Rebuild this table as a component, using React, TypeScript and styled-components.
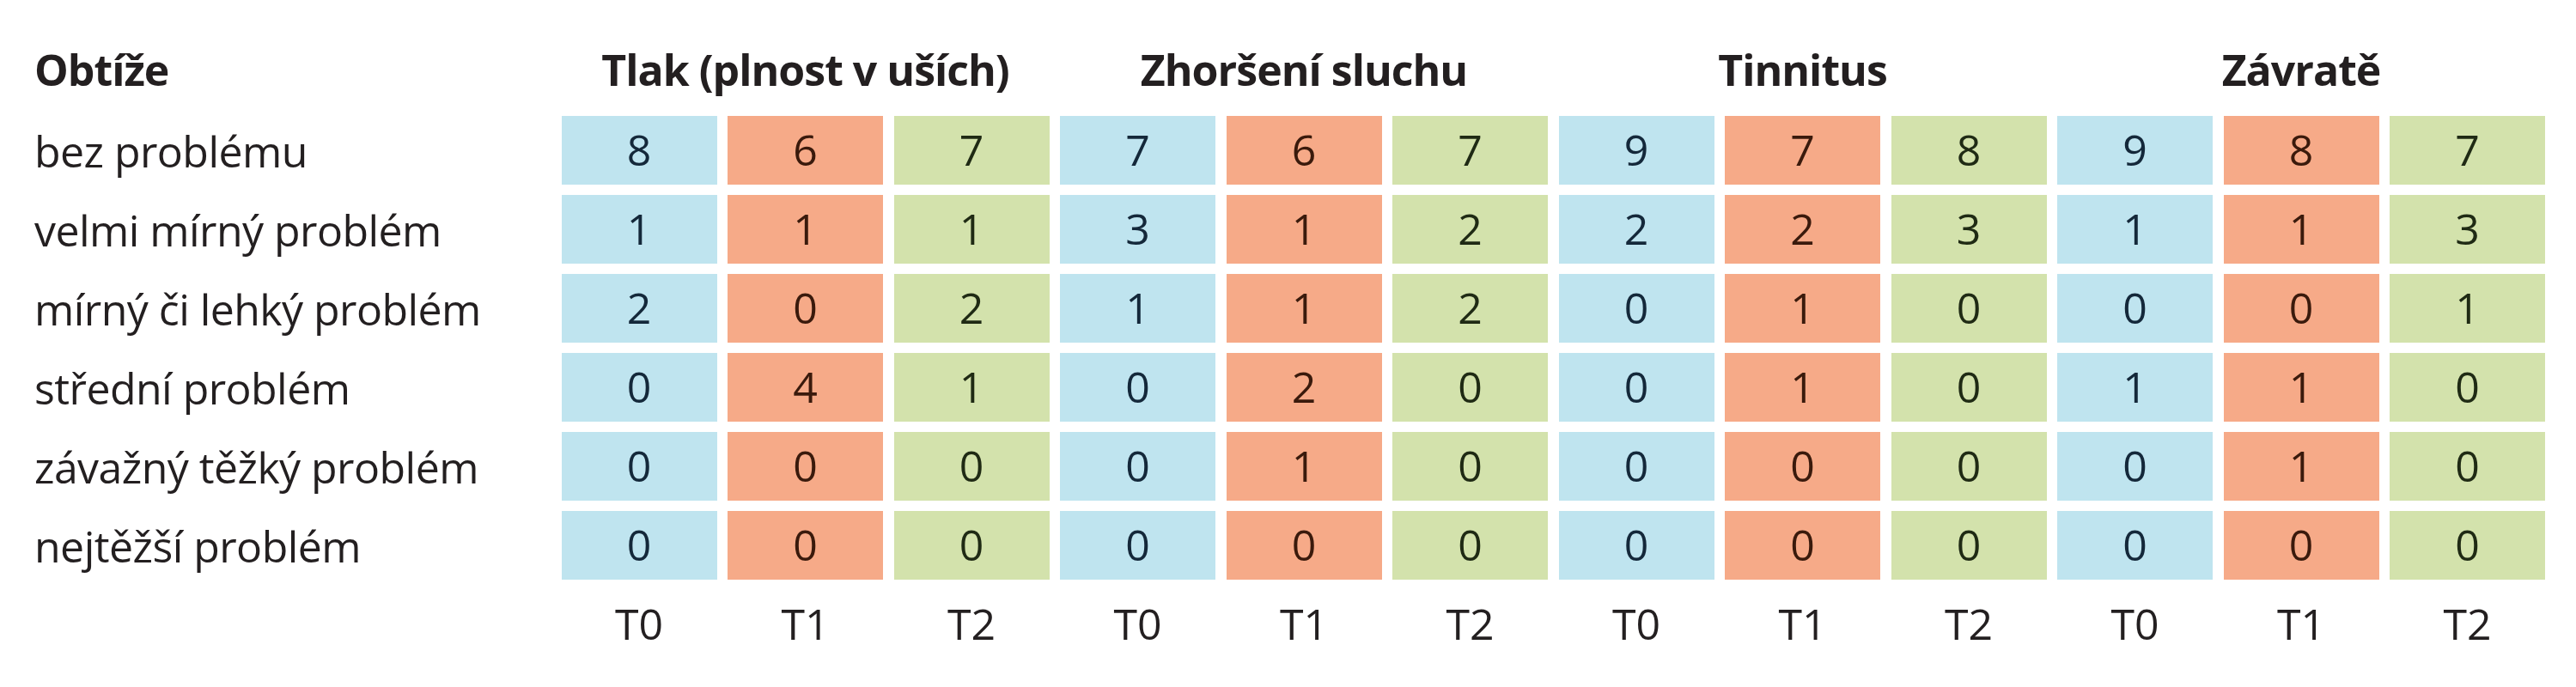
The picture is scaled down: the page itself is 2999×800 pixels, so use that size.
import React from "react";
import styled, { createGlobalStyle } from "styled-components";

const GlobalStyle = createGlobalStyle`
  html, body {
    margin: 0;
    padding: 0;
    background: #ffffff;
  }
  body {
    font-family: "Open Sans", "Noto Sans", sans-serif;
    color: #231f20;
  }
`;

type Tone = "blue" | "orange" | "green";

const toneBg: Record<Tone, string> = {
  blue: "#bfe4ef",
  orange: "#f6aa88",
  green: "#d3e2ac",
};

const toneInk: Record<Tone, string> = {
  blue: "#14283a",
  orange: "#3a1a0c",
  green: "#1f2a14",
};

const Page = styled.div`
  padding: 0 0 0 40px;
  width: 2999px;
  box-sizing: border-box;
`;

const Table = styled.div`
  display: grid;
  grid-template-columns: 601px repeat(12, 181px);
  grid-template-rows: 123px repeat(6, 80px) 80px;
  column-gap: 12.5px;
  row-gap: 12px;
`;

const HeadText = styled.div`
  align-self: end;
  font-size: 50px;
  line-height: 50px;
  font-weight: 700;
  letter-spacing: -1px;
  padding-bottom: 17px;
  white-space: nowrap;
`;

const CornerHeading = styled(HeadText)`
  text-align: left;
`;

const GroupHeading = styled(HeadText)`
  grid-column: span 3;
  text-align: center;
`;

const RowLabel = styled.div`
  display: flex;
  align-items: center;
  font-size: 50px;
  letter-spacing: -0.55px;
  padding-top: 2px;
  white-space: nowrap;
`;

const Cell = styled.div<{ $tone: Tone }>`
  display: flex;
  align-items: center;
  justify-content: center;
  background: ${(p) => toneBg[p.$tone]};
  color: ${(p) => toneInk[p.$tone]};
  font-size: 50px;
  padding-bottom: 3px;
  box-sizing: border-box;
`;

const TimeLabel = styled.div`
  display: flex;
  align-items: center;
  justify-content: center;
  font-size: 50px;
  padding-bottom: 2px;
  box-sizing: border-box;
`;

const groups = ["Tlak (plnost v uších)", "Zhoršení sluchu", "Tinnitus", "Závratě"];
const tones: Tone[] = ["blue", "orange", "green"];
const times = ["T0", "T1", "T2"];

const rows: { label: string; values: number[] }[] = [
  { label: "bez problému", values: [8, 6, 7, 7, 6, 7, 9, 7, 8, 9, 8, 7] },
  { label: "velmi mírný problém", values: [1, 1, 1, 3, 1, 2, 2, 2, 3, 1, 1, 3] },
  { label: "mírný či lehký problém", values: [2, 0, 2, 1, 1, 2, 0, 1, 0, 0, 0, 1] },
  { label: "střední problém", values: [0, 4, 1, 0, 2, 0, 0, 1, 0, 1, 1, 0] },
  { label: "závažný těžký problém", values: [0, 0, 0, 0, 1, 0, 0, 0, 0, 0, 1, 0] },
  { label: "nejtěžší problém", values: [0, 0, 0, 0, 0, 0, 0, 0, 0, 0, 0, 0] },
];

export default function App() {
  return (
    <>
      <GlobalStyle />
      <Page>
        <Table>
          <CornerHeading>Obtíže</CornerHeading>
          {groups.map((g) => (
            <GroupHeading key={g}>{g}</GroupHeading>
          ))}
          {rows.map((r) => (
            <React.Fragment key={r.label}>
              <RowLabel>{r.label}</RowLabel>
              {r.values.map((v, i) => (
                <Cell key={i} $tone={tones[i % 3]}>
                  {v}
                </Cell>
              ))}
            </React.Fragment>
          ))}
          <div />
          {groups.flatMap((g) =>
            times.map((t) => <TimeLabel key={g + t}>{t}</TimeLabel>)
          )}
        </Table>
      </Page>
    </>
  );
}
